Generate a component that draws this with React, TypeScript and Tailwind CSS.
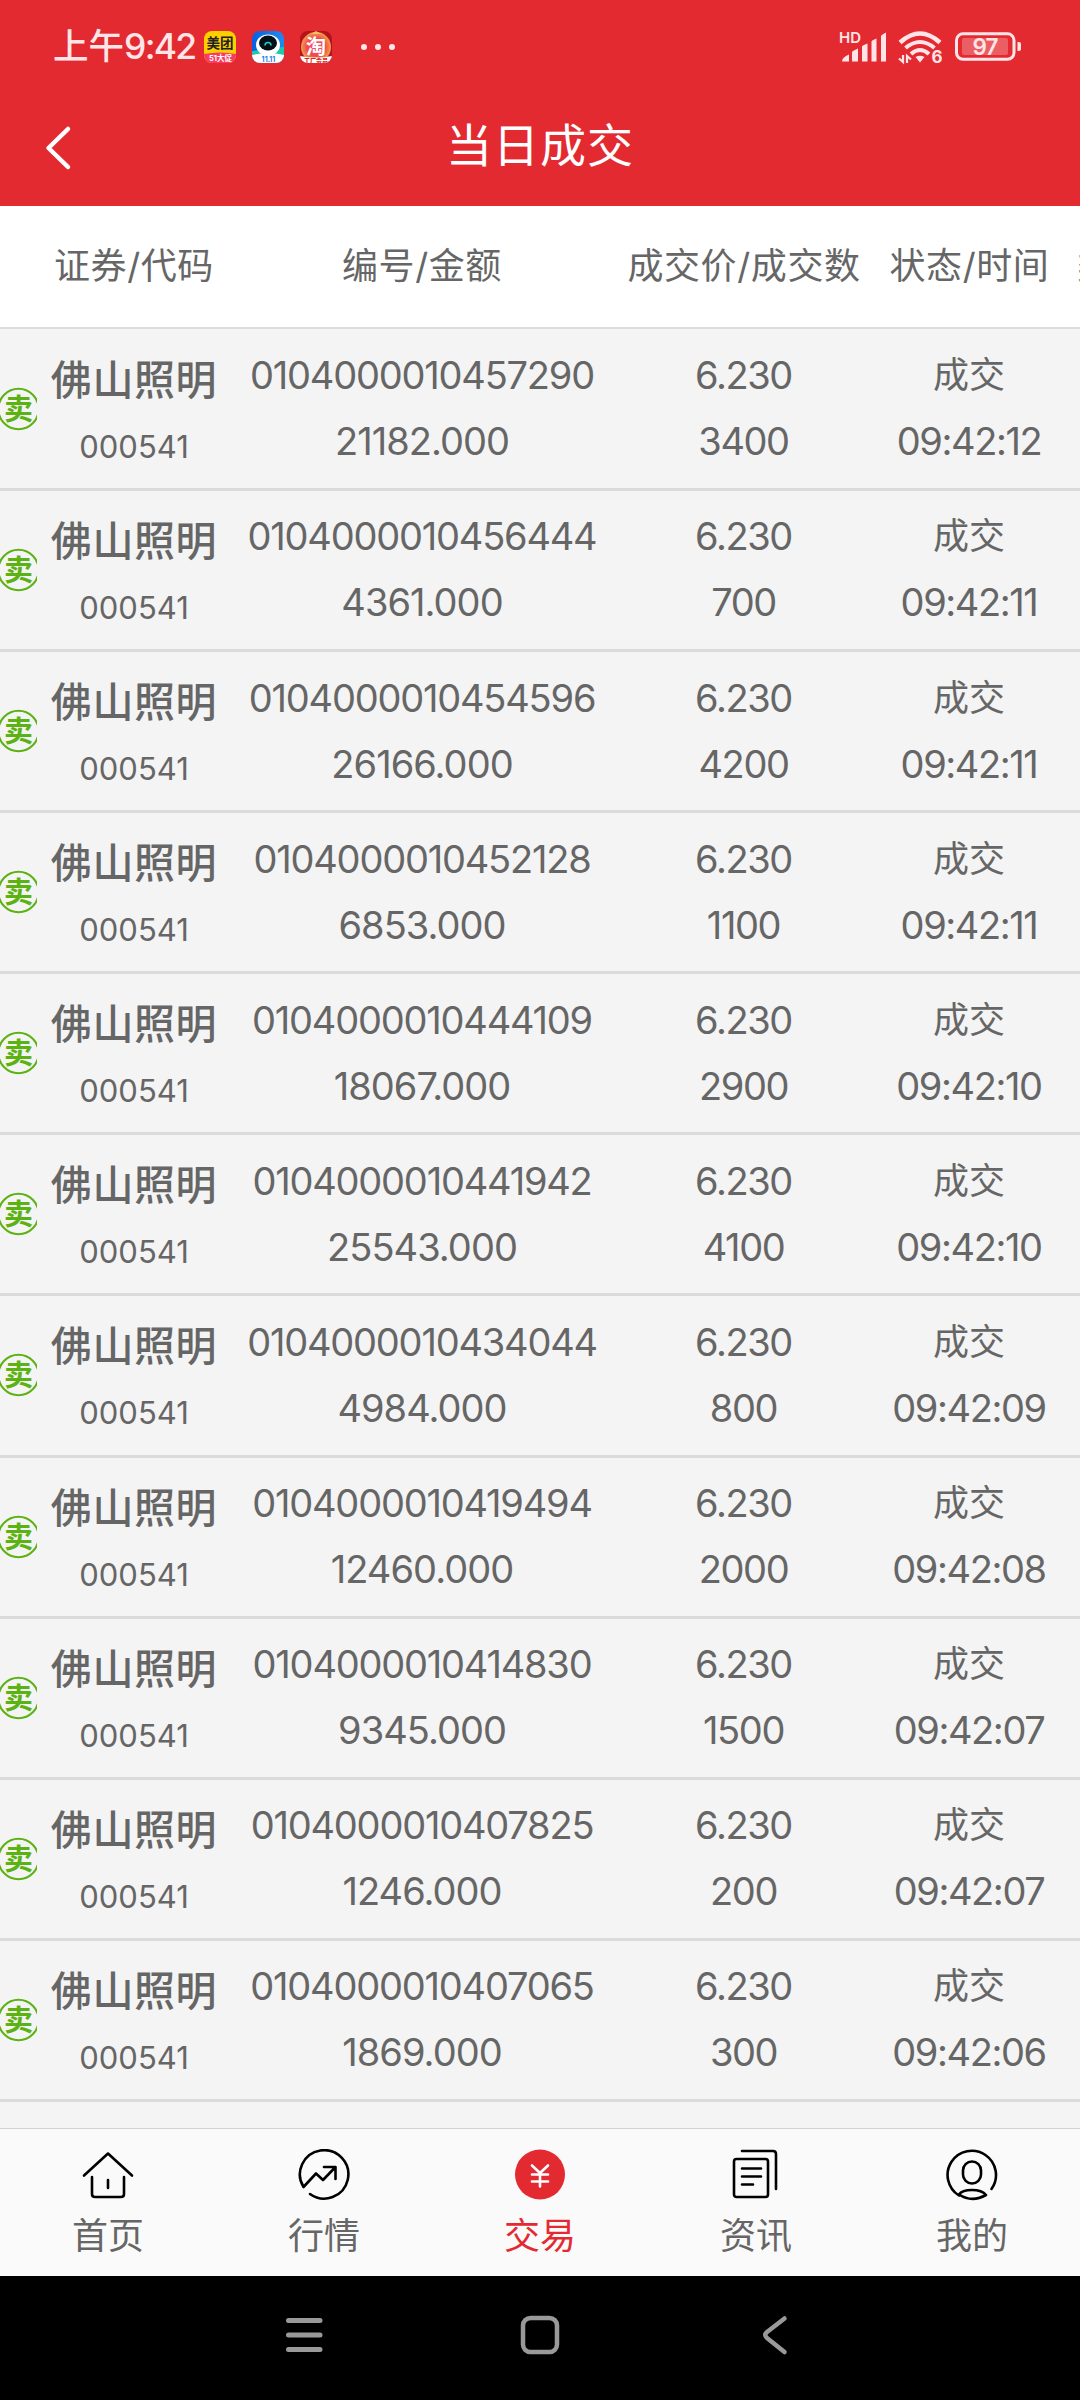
import React from 'react';

interface Deal {
    no: string;
    amount: string;
    qty: string;
    time: string;
}

const deals: Deal[] = [
    { no: '0104000010457290', amount: '21182.000', qty: '3400', time: '09:42:12' },
    { no: '0104000010456444', amount: '4361.000', qty: '700', time: '09:42:11' },
    { no: '0104000010454596', amount: '26166.000', qty: '4200', time: '09:42:11' },
    { no: '0104000010452128', amount: '6853.000', qty: '1100', time: '09:42:11' },
    { no: '0104000010444109', amount: '18067.000', qty: '2900', time: '09:42:10' },
    { no: '0104000010441942', amount: '25543.000', qty: '4100', time: '09:42:10' },
    { no: '0104000010434044', amount: '4984.000', qty: '800', time: '09:42:09' },
    { no: '0104000010419494', amount: '12460.000', qty: '2000', time: '09:42:08' },
    { no: '0104000010414830', amount: '9345.000', qty: '1500', time: '09:42:07' },
    { no: '0104000010407825', amount: '1246.000', qty: '200', time: '09:42:07' },
    { no: '0104000010407065', amount: '1869.000', qty: '300', time: '09:42:06' },
];

const GRID = 'grid grid-cols-[38px_192px_384px_260px_191px_200px] w-[1265px]';

function AppIcons() {
    return (
        <svg width="128" height="32" viewBox="0 0 128 32" className="ml-2">
            <defs>
                <clipPath id="tile"><rect width="32" height="32" rx="8" /></clipPath>
                <linearGradient id="blue" x1="0" y1="0" x2="1" y2="0">
                    <stop offset="0" stopColor="#0a5fe0" />
                    <stop offset="1" stopColor="#1d8bf0" />
                </linearGradient>
                <radialGradient id="glow">
                    <stop offset="0" stopColor="#f0508a" />
                    <stop offset="0.6" stopColor="#f04a4a" />
                    <stop offset="1" stopColor="#f2a04c" />
                </radialGradient>
            </defs>
            <g clipPath="url(#tile)">
                <rect width="32" height="32" fill="#ffd000" />
                <path d="M0 23Q16 20 32 23V32H0Z" fill="#fb3a63" />
                <text x="16" y="17" fontSize="13.5" fontWeight="700" textAnchor="middle" fill="#222">美团</text>
                <text x="16.500" y="30" fontSize="7.500" fontWeight="700" textAnchor="middle" fill="#fff">51大促</text>
            </g>
            <g transform="translate(48 0)" clipPath="url(#tile)">
                <rect width="32" height="32" fill="url(#blue)" />
                <path d="M0 20L32 16V26H0Z" fill="#20c8b0" />
                <path d="M0 24Q16 20 32 24V32H0Z" fill="#fff" />
                <ellipse cx="16" cy="14" rx="12" ry="10.5" fill="#fff" />
                <ellipse cx="16" cy="12" rx="9" ry="7.5" fill="#03101c" />
                <path d="M13 14.5a3 3 0 0 1 6 0" fill="none" stroke="#1fd6b4" strokeWidth="1.6" />
                <text x="16.500" y="31" fontSize="7" fontWeight="700" textAnchor="middle" fill="#1683e8">11.11</text>
            </g>
            <g transform="translate(96 0)" clipPath="url(#tile)">
                <rect width="32" height="32" fill="#b5121b" />
                <circle cx="16" cy="16" r="15" fill="url(#glow)" />
                <path d="M11 3L16 0L21 3Z" fill="#f5c06a" />
                <text x="16" y="22.500" fontSize="20" fontWeight="700" textAnchor="middle" fill="#fff">淘</text>
                <path d="M0 25Q16 28 32 25V32H0Z" fill="#fff" />
                <text x="16" y="31.500" fontSize="6" fontWeight="900" textAnchor="middle" fill="#d8261c">工厂会员</text>
            </g>
        </svg>
    );
}

function SystemIcons() {
    return (
        <svg width="190" height="40" viewBox="0 0 190 40" fill="#ffe5e7" className="mt-1.5 overflow-visible">
            <text x="-1" y="12.800" fontSize="15" fontWeight="600">HD</text>
            <path d="M2 31.500q0-4 7-7v7h-7ZM12 22q0-1 6-3.500v13h-6ZM22 16.500q0-1 5.500-3v18h-5.500ZM31.500 11.500q0-1 5-3v23h-5ZM41 6q0-1 5-3.500v29h-5Z" />
            <g fill="none" stroke="#ffe5e7">
                <path d="M60 12.500Q80 -5.500 100 12.500" strokeWidth="4.500" />
                <path d="M65.500 18Q80 6 94.500 18" strokeWidth="4" />
                <path d="M71 24Q80 16 89 24" strokeWidth="4" />
                <path d="M59 28.500L63 32V25M67 33V26L71 29.500" strokeWidth="2.200" />
                <rect x="116.500" y="3.800" width="57.500" height="25.500" rx="6.500" strokeWidth="3" />
            </g>
            <path d="M75.500 27q4.500-2.500 9 0l-4.500 5.500ZM177.500 12h1.500q2 0 2 2v5q0 2-2 2h-1.500Z" />
            <text x="91.500" y="33" fontSize="17" fontWeight="700">6</text>
            <rect x="122" y="8" width="46" height="17" rx="2" fillOpacity="0.280" />
            <text x="145" y="25" fontSize="22.500" fontWeight="600" letterSpacing="-1" textAnchor="middle">97</text>
        </svg>
    );
}

function StatusBar() {
    return (
        <div className="flex h-[92px] items-center justify-between pt-0.5 pl-[53px] pr-[50px] text-[#ffe5e7]">
            <div className="flex items-center">
                <span className="text-[35.5px] font-medium leading-none whitespace-nowrap">
                    上午<span className="tracking-[-1.7px]">9:42</span>
                </span>
                <AppIcons />
                <div className="ml-[29px] flex gap-2">
                    <i className="size-1.5 rounded-full bg-[#ffe5e7]" />
                    <i className="size-1.5 rounded-full bg-[#ffe5e7]" />
                    <i className="size-1.5 rounded-full bg-[#ffe5e7]" />
                </div>
            </div>
            <SystemIcons />
        </div>
    );
}

function TitleBar() {
    return (
        <div className="grid h-[114px] grid-cols-[120px_1fr_120px] text-white">
            <svg width="120" height="114" fill="none" stroke="currentColor" strokeWidth="4.500" strokeLinecap="round" strokeLinejoin="round">
                <path d="M68 37L48.500 56L68 75" />
            </svg>
            <h1 className="mt-[20px] text-center text-[46px] leading-[66px] tracking-[1px]">当日成交</h1>
        </div>
    );
}

function TableHead() {
    return (
        <div className={`${GRID} h-[123px] border-b-2 border-[#dcdcdc] bg-white pt-[34px] text-center text-[36px] leading-[52px] tracking-[0.6px] whitespace-nowrap`}>
            <span />
            <span>证券/代码</span>
            <span>编号/金额</span>
            <span>成交价/成交数</span>
            <span>状态/时间</span>
            <span className="pl-[12px] text-left">类型</span>
        </div>
    );
}

function DealRow({ deal }: { deal: Deal }) {
    return (
        <div className={`${GRID} h-[161.1px] border-b-3 border-[#dbdbdb] text-center text-[38px] whitespace-nowrap`}>
            <svg width="37" height="50" className="mt-[54px]">
                <circle cx="18.500" cy="25" r="20.200" fill="none" stroke="#5cb213" strokeWidth="2" />
                <text x="18.500" y="35.500" fontSize="29" fontWeight="700" textAnchor="middle" fill="#5cb213">卖</text>
            </svg>
            <div>
                <div className="mt-[20px] text-[41px] font-medium leading-[60px] tracking-[0.6px]">佛山照明</div>
                <div className="mt-[12px] text-[31px] leading-[50px]">000541</div>
            </div>
            <div className="pt-[12.5px] leading-[66px]">
                <div className="tracking-[-1.2px]">{deal.no}</div>
                <div className="tracking-[-0.95px]">{deal.amount}</div>
            </div>
            <div className="pt-[12.5px] pr-px leading-[66px] tracking-[-1.4px]">
                <div>6.230</div>
                <div>{deal.qty}</div>
            </div>
            <div className="pt-[12.5px] pr-px leading-[66px]">
                <div className="text-[36px]">成交</div>
                <div className="tracking-[-1.4px]">{deal.time}</div>
            </div>
        </div>
    );
}

const tabs = [
    {
        label: '首页',
        icon: <path d="M2 26.500L26 4.500L50 26.500M10 28V45Q10 48 13 48H39Q42 48 42 45V28M26 31V39" />,
    },
    {
        label: '行情',
        icon: <path d="M5.500 38A24.200 24.200 0 1 1 12 45M5.500 38L18 24.500L25 31L37 18.500M26 18H37.500V30" />,
    },
    {
        label: '交易',
        active: true,
        icon: (
            <>
                <circle cx="26" cy="25.500" r="25" fill="#e42a31" stroke="none" />
                <path d="M18 16.500L26 24L34 16.500M26 24V37.500M18 25.500H34M18 32.500H34" stroke="#fff" />
            </>
        ),
    },
    {
        label: '资讯',
        icon: (
            <>
                <rect x="4" y="10" width="34" height="38" rx="2.500" />
                <path d="M12 2H43Q46 2 46 5V40M12 19.500H31M12 27.500H31M12 35.500H23" />
            </>
        ),
    },
    {
        label: '我的',
        icon: (
            <>
                <path d="M45.500 40A24.200 24.200 0 1 0 13 46.500" />
                <rect x="17" y="12.500" width="18" height="22" rx="9" />
                <path d="M13 45.500Q16 41 26 41Q36 41 40 46Q26 54 13 45.500" />
            </>
        ),
    },
];

function TabBar() {
    return (
        <div className="grid h-[148px] grid-cols-5 border-t border-[#d2d2d2] bg-[#fafafa]">
            {tabs.map(tab => (
                <div key={tab.label} className="flex flex-col items-center pt-[20px]">
                    <svg width="52" height="52" viewBox="0 0 52 52" fill="none" stroke="#000" strokeWidth="2.600" strokeLinecap="round" strokeLinejoin="round">
                        {tab.icon}
                    </svg>
                    <span className={`mt-[9px] text-[36px] leading-[52px] ${tab.active ? 'text-[#e42a31]' : ''}`}>{tab.label}</span>
                </div>
            ))}
        </div>
    );
}

function SystemNav() {
    return (
        <div className="h-[124px] bg-black">
            <svg width="1080" height="124" fill="none" stroke="#999" strokeWidth="5" strokeLinecap="round" strokeLinejoin="round">
                <path d="M288.500 44.500H320M288.500 59H320M288.500 73.500H320" />
                <rect x="523" y="42" width="34" height="34" rx="7.500" strokeWidth="4.500" />
                <path d="M784.500 42.500L767 56Q763.500 59 767 62L784.500 76" strokeWidth="4.500" />
            </svg>
        </div>
    );
}

export default function App() {
    return (
        <div className="flex h-[2400px] w-[1080px] flex-col overflow-hidden bg-[#f4f4f4] font-[Inter,'Noto_Sans_CJK_SC',sans-serif] text-[#666]">
            <div className="bg-[#e42a31]">
                <StatusBar />
                <TitleBar />
            </div>
            <div className="flex-1 overflow-hidden">
                <TableHead />
                <div className="pt-[0.9px]">
                    {deals.map(deal => (
                        <DealRow key={deal.no} deal={deal} />
                    ))}
                </div>
            </div>
            <TabBar />
            <SystemNav />
        </div>
    );
}
